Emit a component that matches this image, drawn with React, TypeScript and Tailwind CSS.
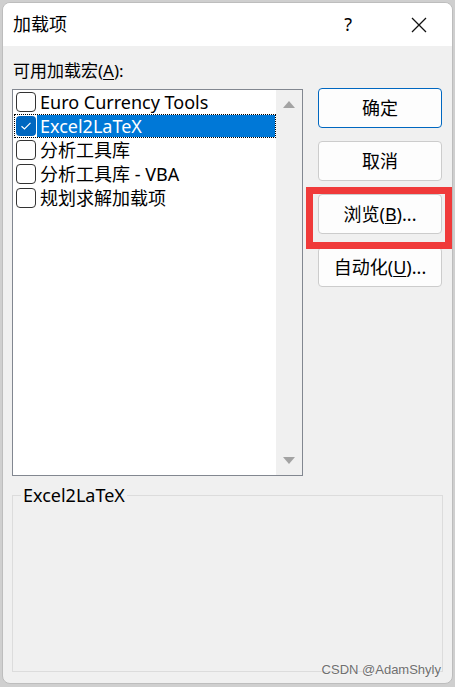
import React from 'react';

const items = [
    { label: 'Euro Currency Tools', checked: false },
    { label: 'Excel2LaTeX', checked: true, selected: true },
    { label: '分析工具库', checked: false },
    { label: '分析工具库 - VBA', checked: false },
    { label: '规划求解加载项', checked: false },
];

const font = 'font-["Noto_Sans","Noto_Sans_CJK_SC",sans-serif]';

function Checkbox({ checked }: { checked: boolean }) {
    if (checked) {
        return (
            <div className="w-[20px] h-[20px] rounded-[4px] bg-[#0067c0] flex items-center justify-center shrink-0">
                <svg width="12" height="10" viewBox="0 0 12 10" fill="none">
                    <path d="M1.5 5.2 L4.5 8 L10.5 1.8" stroke="white" strokeWidth="1.2" />
                </svg>
            </div>
        );
    }
    return <div className="w-[20px] h-[20px] rounded-[4px] border border-[#333] bg-white shrink-0" />;
}

function DlgButton({ children, primary }: { children: React.ReactNode; primary?: boolean }) {
    return (
        <button
            className={`w-[124px] h-[40px] rounded-[4px] bg-[#fdfdfd] text-[18px] text-black flex items-center justify-center ${
                primary ? 'border border-[#0067c0]' : 'border border-[#cccccc]'
            }`}
        >
            {children}
        </button>
    );
}

export default function App() {
    return (
        <div className={`w-[455px] h-[687px] bg-[#cfcfcf] p-[2px] ${font}`}>
            <div className="relative w-[451px] h-[682px] rounded-[8px] bg-[#f0f0f0] overflow-hidden border border-[#bdbdbd] flex flex-col">
                {/* title bar */}
                <div className="h-[43px] bg-white flex items-center shrink-0">
                    <span className="ml-[10px] text-[18px] text-black">加载项</span>
                    <span className="ml-auto mr-[59px] text-[18px] text-black">?</span>
                    <svg className="mr-[25px]" width="16" height="16" viewBox="0 0 16 16">
                        <path d="M1 1 L15 15 M15 1 L1 15" stroke="#111" strokeWidth="1.3" />
                    </svg>
                </div>

                <div className="flex px-[9px] pt-[13px]">
                    <div className="flex flex-col w-[291px]">
                        <div className="h-[24px] leading-[24px] text-[17px] text-black pl-[1px]">
                            可用加载宏(<span className="underline underline-offset-2">A</span>):
                        </div>
                        <div className="mt-[6px] h-[387px] border border-[#828790] bg-white flex">
                            <div className="flex-1 flex flex-col pl-[1px]">
                                {items.map((it) => (
                                    <div
                                        key={it.label}
                                        className={`h-[24px] flex items-center ${
                                            it.selected ? 'border border-dotted border-black' : 'border border-transparent'
                                        }`}
                                    >
                                        <div className="pl-[1px] pr-[1px]">
                                            <Checkbox checked={it.checked} />
                                        </div>
                                        <div
                                            className={`flex-1 h-full flex items-center pl-[3px] text-[18px] ${
                                                it.selected ? 'bg-[#0078d7] text-white' : 'text-black'
                                            }`}
                                        >
                                            {it.label}
                                        </div>
                                    </div>
                                ))}
                            </div>
                            <div className="w-[26px] bg-[#f0f0f0] flex flex-col items-center justify-between py-[11px]">
                                <svg width="12" height="7" viewBox="0 0 12 7">
                                    <path d="M6 0 L12 7 L0 7 Z" fill="#a3a3a3" />
                                </svg>
                                <svg width="12" height="7" viewBox="0 0 12 7">
                                    <path d="M0 0 L12 0 L6 7 Z" fill="#a3a3a3" />
                                </svg>
                            </div>
                        </div>
                    </div>

                    <div className="ml-[15px] mt-[29px] flex flex-col gap-[13px]">
                        <DlgButton primary>确定</DlgButton>
                        <DlgButton>取消</DlgButton>
                        <div className="relative">
                            <DlgButton>
                                浏览(<span className="underline underline-offset-2">B</span>)...
                            </DlgButton>
                            <div className="absolute left-[-12px] top-[-7px] w-[146px] h-[62px] border-[7px] border-[#f03a3a]" />
                        </div>
                        <DlgButton>
                            自动化(<span className="underline underline-offset-2">U</span>)...
                        </DlgButton>
                    </div>
                </div>

                <fieldset className="mx-[9px] mt-[8px] h-[188px] border border-[#dcdcdc]">
                    <legend className="ml-[8px] px-[2px] text-[18px] text-black leading-[22px]">Excel2LaTeX</legend>
                </fieldset>

                <div className='absolute right-[11px] bottom-[4px] text-[13px] text-[#6f6f6f] font-["Liberation_Sans",sans-serif] [text-shadow:0_0_2px_#ffffff]'>
                    CSDN @AdamShyly
                </div>
            </div>
        </div>
    );
}
